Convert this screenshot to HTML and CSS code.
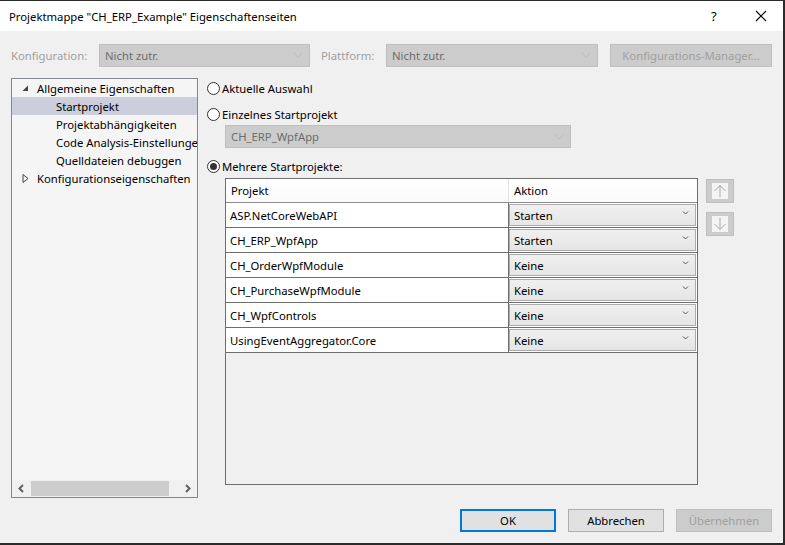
FILE: index.html
```html
<!DOCTYPE html>
<html lang="de">
<head>
<meta charset="utf-8">
<title>Projektmappe Eigenschaftenseiten</title>
<link rel="stylesheet" href="styles.css">
</head>
<body>
<div class="window">
  <div class="titlebar">
    <span class="title">Projektmappe "CH_ERP_Example" Eigenschaftenseiten</span>
    <span class="help">?</span>
    <span class="close"><svg width="12" height="12" viewBox="0 0 12 12"><path d="M1 1L11 11M11 1L1 11" stroke="#000" stroke-width="1.1" fill="none"/></svg></span>
  </div>
  <div class="toolbar">
    <span class="lbl lbl-konf">Konfiguration:</span>
    <div class="select dis sel-konf"><span>Nicht zutr.</span><svg class="chev" width="10" height="6" viewBox="0 0 10 6"><path d="M0.5 0.5L5 5L9.5 0.5" stroke="#bdbdbd" fill="none"/></svg></div>
    <span class="lbl lbl-plat">Plattform:</span>
    <div class="select dis sel-plat"><span>Nicht zutr.</span><svg class="chev" width="10" height="6" viewBox="0 0 10 6"><path d="M0.5 0.5L5 5L9.5 0.5" stroke="#bdbdbd" fill="none"/></svg></div>
    <div class="btn dis btn-mgr">Konfigurations-Manager...</div>
  </div>
  <div class="content">
    <div class="tree">
      <div class="tree-items">
        <div class="node lvl0"><svg class="tri" width="7" height="7" viewBox="0 0 7 7"><path d="M6 0.5L6 6L0.5 6Z" fill="#444"/></svg><span>Allgemeine Eigenschaften</span></div>
        <div class="node lvl1 sel"><span>Startprojekt</span></div>
        <div class="node lvl1"><span>Projektabhängigkeiten</span></div>
        <div class="node lvl1"><span>Code Analysis-Einstellungen</span></div>
        <div class="node lvl1"><span>Quelldateien debuggen</span></div>
        <div class="node lvl0"><svg class="tri" width="7" height="9" viewBox="0 0 7 9"><path d="M1 0.5L6 4.5L1 8.5Z" fill="none" stroke="#444"/></svg><span>Konfigurationseigenschaften</span></div>
      </div>
      <div class="hscroll">
        <svg class="sarrow" width="8" height="9" viewBox="0 0 8 9"><path d="M6 1L2.5 4.5L6 8" stroke="#606060" stroke-width="2" fill="none"/></svg>
        <div class="track"><div class="thumb"></div></div>
        <svg class="sarrow" width="8" height="9" viewBox="0 0 8 9"><path d="M2 1L5.5 4.5L2 8" stroke="#606060" stroke-width="2" fill="none"/></svg>
      </div>
    </div>
    <div class="pane">
      <div class="radio-row r1"><span class="radio"></span><span>Aktuelle Auswahl</span></div>
      <div class="radio-row r2"><span class="radio"></span><span>Einzelnes Startprojekt</span></div>
      <div class="select dis sel-proj"><span>CH_ERP_WpfApp</span><svg class="chev" width="10" height="6" viewBox="0 0 10 6"><path d="M0.5 0.5L5 5L9.5 0.5" stroke="#bdbdbd" fill="none"/></svg></div>
      <div class="radio-row r3"><span class="radio on"></span><span>Mehrere Startprojekte:</span></div>
      <div class="grid-area">
        <div class="grid">
          <div class="grow ghead"><div class="c1">Projekt</div><div class="c2">Aktion</div></div>
          <div class="grow"><div class="c1">ASP.NetCoreWebAPI</div><div class="c2"><div class="combo"><span>Starten</span><svg class="cchev" width="7" height="4" viewBox="0 0 7 4"><path d="M1 0.5L3.5 3L6 0.5" stroke="#555" fill="none"/></svg></div></div></div>
          <div class="grow"><div class="c1">CH_ERP_WpfApp</div><div class="c2"><div class="combo"><span>Starten</span><svg class="cchev" width="7" height="4" viewBox="0 0 7 4"><path d="M1 0.5L3.5 3L6 0.5" stroke="#555" fill="none"/></svg></div></div></div>
          <div class="grow"><div class="c1">CH_OrderWpfModule</div><div class="c2"><div class="combo"><span>Keine</span><svg class="cchev" width="7" height="4" viewBox="0 0 7 4"><path d="M1 0.5L3.5 3L6 0.5" stroke="#555" fill="none"/></svg></div></div></div>
          <div class="grow"><div class="c1">CH_PurchaseWpfModule</div><div class="c2"><div class="combo"><span>Keine</span><svg class="cchev" width="7" height="4" viewBox="0 0 7 4"><path d="M1 0.5L3.5 3L6 0.5" stroke="#555" fill="none"/></svg></div></div></div>
          <div class="grow"><div class="c1">CH_WpfControls</div><div class="c2"><div class="combo"><span>Keine</span><svg class="cchev" width="7" height="4" viewBox="0 0 7 4"><path d="M1 0.5L3.5 3L6 0.5" stroke="#555" fill="none"/></svg></div></div></div>
          <div class="grow"><div class="c1">UsingEventAggregator.Core</div><div class="c2"><div class="combo"><span>Keine</span><svg class="cchev" width="7" height="4" viewBox="0 0 7 4"><path d="M1 0.5L3.5 3L6 0.5" stroke="#555" fill="none"/></svg></div></div></div>
        </div>
        <div class="movers">
          <div class="mover"><div class="mover-in"><svg width="14" height="14" viewBox="0 0 14 14"><path d="M7 13V1.5M1.5 7L7 1.5L12.5 7" stroke="#a8a8a8" fill="none"/></svg></div></div>
          <div class="mover"><div class="mover-in"><svg width="14" height="14" viewBox="0 0 14 14"><path d="M7 1V12.5M1.5 7L7 12.5L12.5 7" stroke="#a8a8a8" fill="none"/></svg></div></div>
        </div>
      </div>
    </div>
  </div>
  <div class="footer">
    <div class="btn btn-ok">OK</div>
    <div class="btn">Abbrechen</div>
    <div class="btn dis">Übernehmen</div>
  </div>
</div>
</body>
</html>
```

FILE: styles.css
```css
* { box-sizing: border-box; }
html, body { margin: 0; padding: 0; }
body {
  width: 785px;
  height: 545px;
  overflow: hidden;
  font-family: "Noto Sans", "Open Sans", sans-serif;
  font-size: 11.3px;
  color: #000;
  background: #f0f0f0;
}
.window {
  width: 785px;
  height: 545px;
  border-top: 1px solid #2b2b2b;
  border-right: 2px solid #2b2b2b;
  border-bottom: 2px solid #2b2b2b;
  background: #f0f0f0;
  display: flex;
  flex-direction: column;
}
.titlebar {
  height: 30px;
  background: #fff;
  display: flex;
  align-items: center;
  padding-left: 9px;
  flex: none;
}
.title { flex: 1; }
.help { width: 44px; text-align: left; font-size: 13px; }
.close { width: 28px; display: flex; align-items: center; }
.toolbar {
  display: flex;
  align-items: center;
  height: 24px;
  margin-top: 12px;
  padding-left: 11px;
  flex: none;
}
.lbl { color: #9f9f9f; }
.lbl-konf { width: 88px; }
.lbl-plat { width: 65px; margin-left: 11px; }
.select {
  height: 23px;
  display: flex;
  align-items: center;
  padding-left: 5px;
  padding-right: 6px;
  justify-content: space-between;
}
.select.dis {
  background: #cccccc;
  border: 1px solid #bfbfbf;
  color: #6d6d6d;
}
.sel-konf { width: 211px; }
.sel-plat { width: 212px; }
.btn {
  height: 23px;
  display: flex;
  align-items: center;
  justify-content: center;
  background: #e1e1e1;
  border: 1px solid #adadad;
  width: 96px;
}
.btn.dis {
  background: #cccccc;
  border-color: #bfbfbf;
  color: #a0a0a0;
}
.btn-mgr { width: 162px; margin-left: 12px; }
.content {
  display: flex;
  margin-top: 11px;
  padding-left: 11px;
  height: 420px;
  flex: none;
}
.tree {
  width: 187px;
  height: 420px;
  border: 1px solid #828790;
  background: #f5f5f5;
  display: flex;
  flex-direction: column;
  overflow: hidden;
}
.tree-items { flex: 1; padding-top: 0; }
.node {
  height: 18px;
  display: flex;
  align-items: center;
  white-space: nowrap;
}
.node.lvl0 { padding-left: 10px; }
.node.lvl0 .tri { margin-right: 8px; flex: none; }
.node.lvl1 { padding-left: 44px; }
.node.sel { background: #cccedb; }
.hscroll {
  height: 17px;
  display: flex;
  align-items: center;
  background: #f0f0f0;
}
.sarrow { flex: none; margin: 0 5px; }
.track { flex: 1; height: 15px; }
.thumb { width: 138px; height: 15px; background: #cdcdcd; margin-left: 1px; }
.pane {
  margin-left: 9px;
  flex: 1;
  display: flex;
  flex-direction: column;
}
.radio-row {
  height: 18px;
  display: flex;
  align-items: center;
}
.r1 { margin-top: 1px; }
.r2 { margin-top: 8px; }
.r3 { margin-top: 9px; }
.radio {
  width: 13px;
  height: 13px;
  border: 1px solid #333;
  border-radius: 50%;
  background: #fff;
  margin-right: 2px;
  position: relative;
  flex: none;
}
.radio.on::after {
  content: "";
  position: absolute;
  left: 2px;
  top: 2px;
  width: 7px;
  height: 7px;
  border-radius: 50%;
  background: #333;
}
.sel-proj { width: 346px; margin-left: 18px; margin-top: 2px; }
.grid-area {
  display: flex;
  margin-left: 18px;
  margin-top: 3px;
}
.grid {
  width: 473px;
  height: 307px;
  border: 1px solid #6e6e6e;
  background: #f0f0f0;
}
.grow {
  display: flex;
  height: 25px;
  border-bottom: 1px solid #6e6e6e;
  background: #fff;
}
.grow.ghead {
  height: 24px;
  border-bottom-color: #8c8c8c;
  background: linear-gradient(#ffffff, #fbfbfb);
}
.c1 {
  width: 283px;
  border-right: 1px solid #6e6e6e;
  padding-left: 4px;
  display: flex;
  align-items: center;
}
.ghead .c1 { border-right-color: #e5e5e5; padding-left: 5px; }
.c2 {
  flex: 1;
  display: flex;
  align-items: stretch;
  padding: 1px 1px 1px 0;
}
.ghead .c2 { padding-left: 5px; align-items: center; }
.combo {
  flex: 1;
  border: 1px solid #acacac;
  background: linear-gradient(#f0f0f0, #e5e5e5);
  display: flex;
  align-items: center;
  justify-content: space-between;
  padding-left: 4px;
  padding-right: 6px;
}
.cchev { flex: none; margin-bottom: 4px; }
.movers {
  margin-left: 8px;
  margin-top: 1px;
  display: flex;
  flex-direction: column;
  gap: 9px;
}
.mover {
  width: 28px;
  height: 24px;
  background: #cccccc;
  border: 1px solid #bfbfbf;
  display: flex;
  align-items: center;
  justify-content: center;
}
.mover-in {
  width: 16px;
  height: 16px;
  background: #f4f4f4;
  display: flex;
  align-items: center;
  justify-content: center;
}
.footer {
  display: flex;
  justify-content: flex-end;
  gap: 12px;
  margin-top: 11px;
  padding-right: 11px;
}
.btn-ok { border: 2px solid #0078d7; }
```
